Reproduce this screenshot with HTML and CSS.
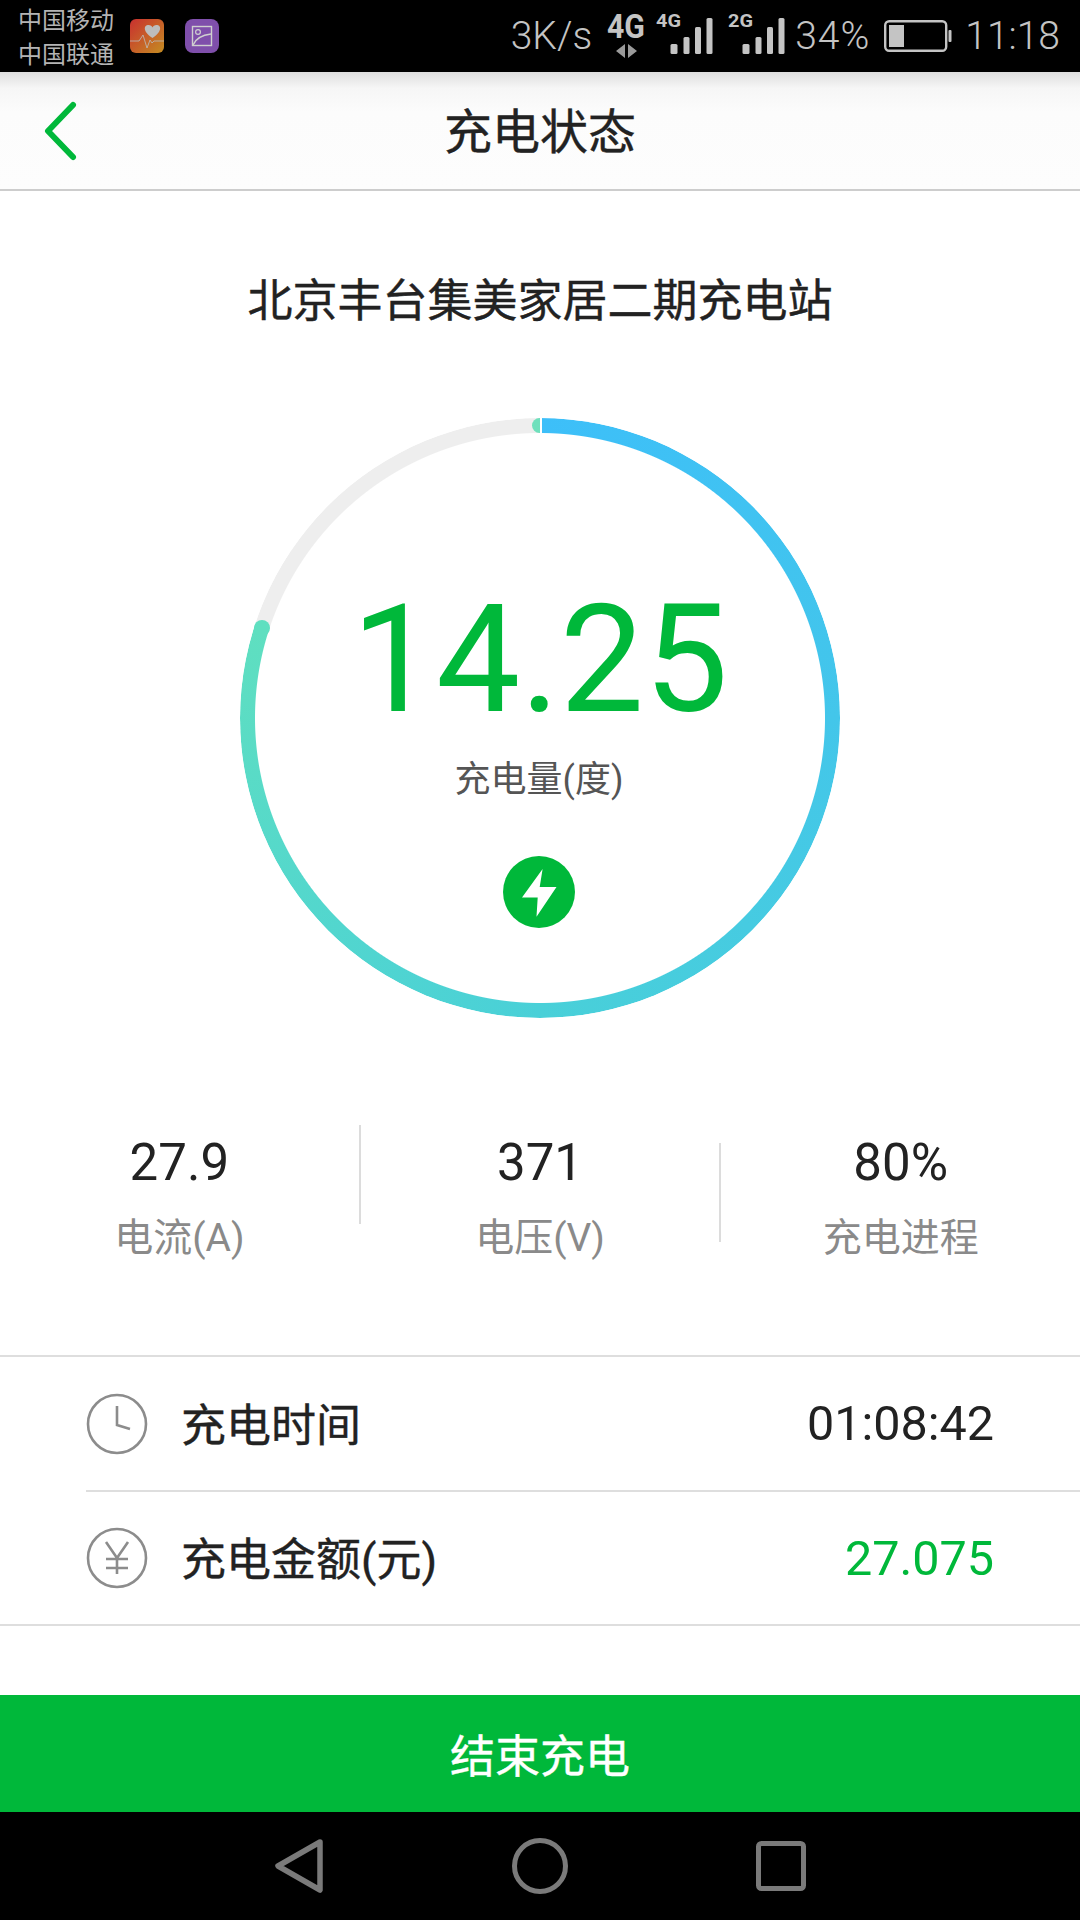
FILE: index.html
```html
<!DOCTYPE html>
<html lang="zh-CN">
<head>
  <meta charset="UTF-8" />
  <title>充电状态</title>
  <link rel="stylesheet" href="styles.css">
</head>
<body>
<div class="status-bar">
  <div class="carriers">
    <div>中国移动</div>
    <div>中国联通</div>
  </div>
  <svg class="app-icon" viewBox="0 0 34 34">
    <defs>
      <linearGradient id="healthBg" x1="0" y1="0" x2="1" y2="1">
        <stop offset="0" stop-color="#c9302f"/>
        <stop offset="1" stop-color="#c48d22"/>
      </linearGradient>
    </defs>
    <rect width="34" height="34" rx="6" fill="url(#healthBg)"/>
    <path d="M22.5 19 C12 12 14 6 18.5 6 C20.5 6 22 7 22.5 8.5 C23 7 24.5 6 26.5 6 C31 6 33 12 22.5 19 Z" fill="#bdbdbd"/>
    <path d="M0 22 H9 L13 16 L17 29 L20 21 L22 24 L24 22 H34" fill="none" stroke="#bdbdbd" stroke-width="0.8"/>
  </svg>
  <svg class="app-icon app-icon-second" viewBox="0 0 34 34">
    <rect width="34" height="34" rx="8" fill="#7f4fab"/>
    <rect x="7.5" y="7.5" width="19" height="19" fill="none" stroke="#cfcfcf" stroke-width="1.4"/>
    <circle cx="13" cy="13" r="2.4" fill="none" stroke="#cfcfcf" stroke-width="1.2"/>
    <path d="M8 26 C11 19 17 16 26 15" fill="none" stroke="#cfcfcf" stroke-width="1.4"/>
  </svg>
  <div class="status-right">
    <span class="speed">3K/s</span>
    <svg class="net" width="39" height="44" viewBox="0 0 39 44">
      <text x="0" y="24" font-size="33" font-weight="700" textLength="38" lengthAdjust="spacingAndGlyphs">4G</text>
      <path d="M18 30 V44 L9 37 Z M21 30 V44 L30 37 Z" fill="#9a9a9a"/>
    </svg>
    <svg class="signal" width="60" height="44" viewBox="0 0 60 44">
      <text x="0" y="13" font-size="18" font-weight="700" textLength="25" lengthAdjust="spacingAndGlyphs">4G</text>
      <rect x="14.5" y="30" width="7" height="10" rx="1.5"/>
      <rect x="27.5" y="23" width="6" height="17" rx="1.5"/>
      <rect x="39" y="13" width="6" height="27" rx="1.5"/>
      <rect x="50.5" y="4" width="6" height="36" rx="1.5"/>
    </svg>
    <svg class="signal signal-second" width="60" height="44" viewBox="0 0 60 44">
      <text x="0" y="13" font-size="18" font-weight="700" textLength="25" lengthAdjust="spacingAndGlyphs">2G</text>
      <rect x="14.5" y="30" width="7" height="10" rx="1.5"/>
      <rect x="27.5" y="23" width="6" height="17" rx="1.5"/>
      <rect x="39" y="13" width="6" height="27" rx="1.5"/>
      <rect x="50.5" y="4" width="6" height="36" rx="1.5"/>
    </svg>
    <span class="battery-pct">34%</span>
    <svg class="battery" width="68" height="32" viewBox="0 0 68 32">
      <rect x="1.2" y="1.2" width="61" height="29.6" rx="4" fill="none" stroke="#c4c4c4" stroke-width="2.4"/>
      <rect x="5" y="5" width="15" height="22" fill="#c4c4c4"/>
      <rect x="64.5" y="10" width="3" height="12" rx="1" fill="#c4c4c4"/>
    </svg>
    <span class="clock">11:18</span>
  </div>
</div>

<header class="top-bar">
  <svg class="back" width="40" height="64" viewBox="0 0 40 64">
    <path d="M34 6 L9 32 L34 58" fill="none" stroke="#00b83a" stroke-width="6" stroke-linecap="round" stroke-linejoin="round"/>
  </svg>
  <h1>充电状态</h1>
</header>

<main class="page">
  <h2 class="station">北京丰台集美家居二期充电站</h2>

  <div class="ring">
    <div class="ring-start"></div>
    <div class="ring-end"></div>
    <div class="amount">14.25</div>
    <div class="amount-label">充电量(度)</div>
    <svg class="bolt" width="72" height="72" viewBox="0 0 72 72">
      <circle cx="36" cy="36" r="36" fill="#00b83a"/>
      <path d="M39.6 13 L36.7 31 H53.5 L33.5 60.8 L34.7 41.6 H19 Z" fill="#fff"/>
    </svg>
  </div>

  <div class="stats">
    <div class="stat">
      <div class="stat-value">27.9</div>
      <div class="stat-label">电流(A)</div>
    </div>
    <div class="divider"></div>
    <div class="stat">
      <div class="stat-value">371</div>
      <div class="stat-label">电压(V)</div>
    </div>
    <div class="divider divider-low"></div>
    <div class="stat">
      <div class="stat-value">80%</div>
      <div class="stat-label">充电进程</div>
    </div>
  </div>

  <div class="info-list">
    <div class="info-row">
      <svg class="info-icon" width="62" height="62" viewBox="0 0 62 62">
        <circle cx="31" cy="31" r="29" fill="none" stroke="#8c8c8c" stroke-width="2.6"/>
        <path d="M31 13 V32 L44 36" fill="none" stroke="#8c8c8c" stroke-width="2.6"/>
      </svg>
      <span class="info-name">充电时间</span>
      <span class="info-value">01:08:42</span>
    </div>
    <div class="info-row">
      <svg class="info-icon" width="62" height="62" viewBox="0 0 62 62">
        <circle cx="31" cy="31" r="29" fill="none" stroke="#8c8c8c" stroke-width="2.6"/>
        <path d="M20 15 L31 31 L42 15 M20 32 H42 M20 41 H42 M31 31 V47" fill="none" stroke="#8c8c8c" stroke-width="2.6"/>
      </svg>
      <span class="info-name">充电金额(元)</span>
      <span class="info-value info-value-green">27.075</span>
    </div>
  </div>
</main>

<button class="stop-btn">结束充电</button>

<nav class="nav-bar">
  <svg width="50" height="56" viewBox="0 0 50 56">
    <path d="M46 4 L4 28 L46 52 Z" fill="none" stroke="#7a7a7a" stroke-width="5.5" stroke-linejoin="round"/>
  </svg>
  <svg width="56" height="56" viewBox="0 0 56 56">
    <circle cx="28" cy="28" r="25.5" fill="none" stroke="#7a7a7a" stroke-width="5"/>
  </svg>
  <svg width="50" height="50" viewBox="0 0 50 50">
    <rect x="2.5" y="2.5" width="45" height="45" rx="3" fill="none" stroke="#7a7a7a" stroke-width="5"/>
  </svg>
</nav>
</body>
</html>
```

FILE: styles.css
```css
* {
  box-sizing: border-box;
}
body {
  margin: 0;
  width: 1080px;
  height: 1920px;
  overflow: hidden;
  background: #fff;
  color: #222;
  font-family: Roboto, "Noto Sans CJK SC", sans-serif;
}

/* status bar */
.status-bar {
  height: 72px;
  background: #000;
  color: #bdbdbd;
  display: flex;
  align-items: center;
  padding-left: 18px;
}
.carriers {
  width: 112px;
  padding-top: 4px;
  font-size: 24px;
  line-height: 34px;
  color: #b4b4b4;
}
.app-icon {
  width: 34px;
  height: 34px;
  flex-shrink: 0;
}
.app-icon-second {
  margin-left: 21px;
}
.status-right {
  margin-left: auto;
  padding-right: 20px;
  display: flex;
  align-items: center;
  height: 72px;
}
.status-right svg {
  flex-shrink: 0;
  overflow: visible;
}
.speed, .battery-pct, .clock {
  font-size: 39px;
  line-height: 60px;
  font-weight: 300;
  color: #c4c4c4;
}
.net {
  margin-left: 15px;
  fill: #c4c4c4;
}
.signal {
  margin-left: 10px;
  fill: #c4c4c4;
}
.signal-second {
  margin-left: 12px;
}
.battery-pct {
  margin-left: 7px;
  letter-spacing: 1px;
}
.battery {
  margin-left: 14px;
}
.clock {
  margin-left: 13px;
}

/* header */
.top-bar {
  height: 119px;
  position: relative;
  display: flex;
  align-items: center;
  justify-content: center;
  background: linear-gradient(#dedede 0, #f6f6f6 16px, #fcfcfc 40px, #fdfdfd 100%);
  border-bottom: 2px solid #cdcdcd;
}
.top-bar h1 {
  margin: 4px 0 0;
  font-size: 48px;
  font-weight: 400;
  -webkit-text-stroke: 0.4px #222;
  line-height: 60px;
}
.back {
  position: absolute;
  left: 39px;
  top: 27px;
}

/* main */
.page {
  height: 1504px;
}
.station {
  margin: 0;
  padding-top: 81px;
  text-align: center;
  font-size: 45px;
  font-weight: 400;
  -webkit-text-stroke: 0.4px #222;
  line-height: 60px;
}
.ring {
  position: relative;
  width: 600px;
  height: 600px;
  margin: 86px auto 0;
  padding-top: 167px;
  display: flex;
  flex-direction: column;
  align-items: center;
}
.ring::before {
  content: "";
  position: absolute;
  inset: 0;
  border-radius: 50%;
  background: conic-gradient(#3dbff9 0deg, #43c6ea 90deg, #49d0d8 180deg, #5fdfc0 288deg, #eeeeee 288deg, #eeeeee 360deg);
  -webkit-mask: radial-gradient(closest-side, transparent 284.5px, #000 285.5px);
  mask: radial-gradient(closest-side, transparent 284.5px, #000 285.5px);
}
.ring-start {
  position: absolute;
  top: 0;
  left: 292px;
  width: 10px;
  height: 15px;
  background: #6fe0bc;
  border-right: 2px solid #fff;
  border-radius: 8px 0 0 8px;
}
.ring-end {
  position: absolute;
  left: 14px;
  top: 202px;
  width: 16px;
  height: 16px;
  border-radius: 50%;
  background: #5fdfc0;
}
.amount {
  font-size: 150px;
  line-height: 150px;
  color: #00b83a;
}
.amount-label {
  margin: 20px 0 0 -2px;
  font-size: 36px;
  line-height: 50px;
  color: #555;
}
.bolt {
  margin: 51px 0 0 -2px;
}

/* stats */
.stats {
  display: flex;
  height: 140px;
  margin-top: 107px;
}
.stat {
  flex: 1;
  text-align: center;
}
.stat-value {
  font-size: 51px;
  line-height: 60px;
  color: #222;
  margin-top: 8px;
}
.stat-label {
  margin-top: 20px;
  font-size: 39px;
  line-height: 50px;
  color: #8a8a8a;
}
.divider {
  width: 2px;
  height: 99px;
  background: #dcdcdc;
}
.divider-low {
  margin-top: 18px;
}

/* list */
.info-list {
  margin-top: 90px;
  border-top: 2px solid #dedede;
  border-bottom: 2px solid #dedede;
}
.info-row {
  height: 133px;
  margin-left: 86px;
  padding-right: 86px;
  display: flex;
  align-items: center;
}
.info-row + .info-row {
  height: 134px;
  border-top: 2px solid #dedede;
}
.info-icon {
  flex-shrink: 0;
}
.info-name {
  margin: -3px 0 0 33px;
  font-size: 45px;
  font-weight: 400;
  -webkit-text-stroke: 0.4px #222;
  color: #222;
}
.info-value {
  margin-left: auto;
  font-size: 48.5px;
  color: #222;
}
.info-value-green {
  color: #00b83a;
}

/* bottom */
.stop-btn {
  display: block;
  width: 100%;
  height: 117px;
  border: none;
  background: #00b83a;
  color: #fff;
  font-family: inherit;
  font-size: 45px;
  -webkit-text-stroke: 0.4px #fff;
  padding: 0;
}
.nav-bar {
  height: 108px;
  background: #000;
  display: flex;
  align-items: center;
  justify-content: center;
  gap: 188px;
}
```
